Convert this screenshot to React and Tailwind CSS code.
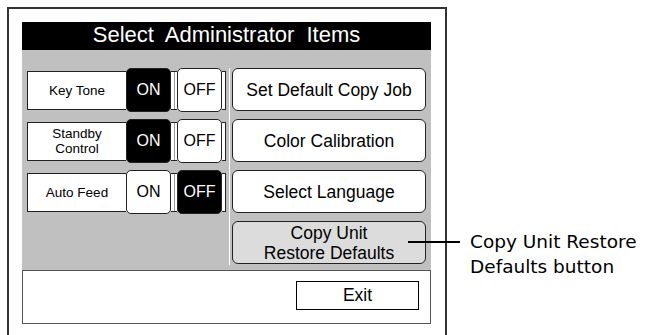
const rows = [
  { label: ["Key Tone"], on: true },
  { label: ["Standby", "Control"], on: true },
  { label: ["Auto Feed"], on: false },
];

const actions = [
  { text: ["Set Default Copy Job"] },
  { text: ["Color Calibration"] },
  { text: ["Select Language"] },
  { text: ["Copy Unit", "Restore Defaults"], gray: true },
];

function Toggle({ active, children }) {
  return (
    <div
      className={`w-[45px] h-[44px] shrink-0 rounded-[5px] border border-[#222] flex items-center justify-center text-[16px] ${
        active ? "bg-black text-white" : "bg-white text-black"
      }`}
    >
      {children}
    </div>
  );
}

function SettingRow({ label, on }) {
  return (
    <div className="flex items-center h-[44px]">
      <div className="w-[99px] h-[39px] bg-white border-y border-l border-[#222] flex flex-col items-center justify-center text-[13.5px] leading-[15px] text-black">
        {label.map((l) => (
          <span key={l}>{l}</span>
        ))}
      </div>
      <Toggle active={on}>ON</Toggle>
      <div className="w-[6px] h-[39px] bg-white border-y border-[#222] flex justify-center">
        <div className="w-px h-full bg-[#999]" />
      </div>
      <Toggle active={!on}>OFF</Toggle>
      <div className="w-[4px] h-[39px] bg-white border-y border-r border-[#222]" />
    </div>
  );
}

export default function App() {
  return (
    <div
      className="relative w-[656px] h-[335px] bg-white overflow-hidden flex"
      style={{ fontFamily: '"Liberation Sans", Arial, sans-serif' }}
    >
      {/* device frame */}
      <div className="ml-[7px] mt-[7px] w-[440px] h-[340px] border-l-2 border-t-2 border-r-2 border-[#333] pl-[13px] pr-[14px] pt-[13px]">
        <div className="w-[409px] flex flex-col">
          <div className="h-[28px] bg-black text-white text-[22px] leading-[26px] text-center [word-spacing:6px]">
            Select Administrator Items
          </div>

          <div className="h-[220px] bg-[#c0c0c0] flex pt-[18px] pl-[5px]">
            <div className="w-[199px] flex flex-col gap-[7px]">
              {rows.map((r) => (
                <SettingRow key={r.label[0]} label={r.label} on={r.on} />
              ))}
            </div>
            <div className="ml-[3px] w-px h-[197px] bg-white" />
            <div className="ml-[2px] w-[194px] flex flex-col gap-[8px]">
              {actions.map((a) => (
                <div
                  key={a.text[0]}
                  className={`h-[43px] rounded-[6px] border border-[#222] flex flex-col items-center justify-center text-[17.5px] leading-[20px] text-black ${
                    a.gray ? "bg-[#dcdcdc]" : "bg-white"
                  }`}
                >
                  {a.text.map((t) => (
                    <span key={t}>{t}</span>
                  ))}
                </div>
              ))}
            </div>
          </div>

          <div className="h-[54px] w-[409px] border border-[#555] bg-white flex justify-end items-start pt-[10px] pr-[11px]">
            <div className="w-[123px] h-[29px] border border-black flex items-center justify-center text-[17.5px] text-black">
              Exit
            </div>
          </div>
        </div>
      </div>

      {/* callout */}
      <div
        className="ml-[23px] mt-[229px] text-[18.5px] leading-[25px] text-black"
        style={{ fontFamily: '"DejaVu Sans", sans-serif' }}
      >
        <div>Copy Unit Restore</div>
        <div>Defaults button</div>
      </div>
      <div className="absolute left-[408px] top-[241px] w-[52px] h-[2px] bg-black" />
    </div>
  );
}
